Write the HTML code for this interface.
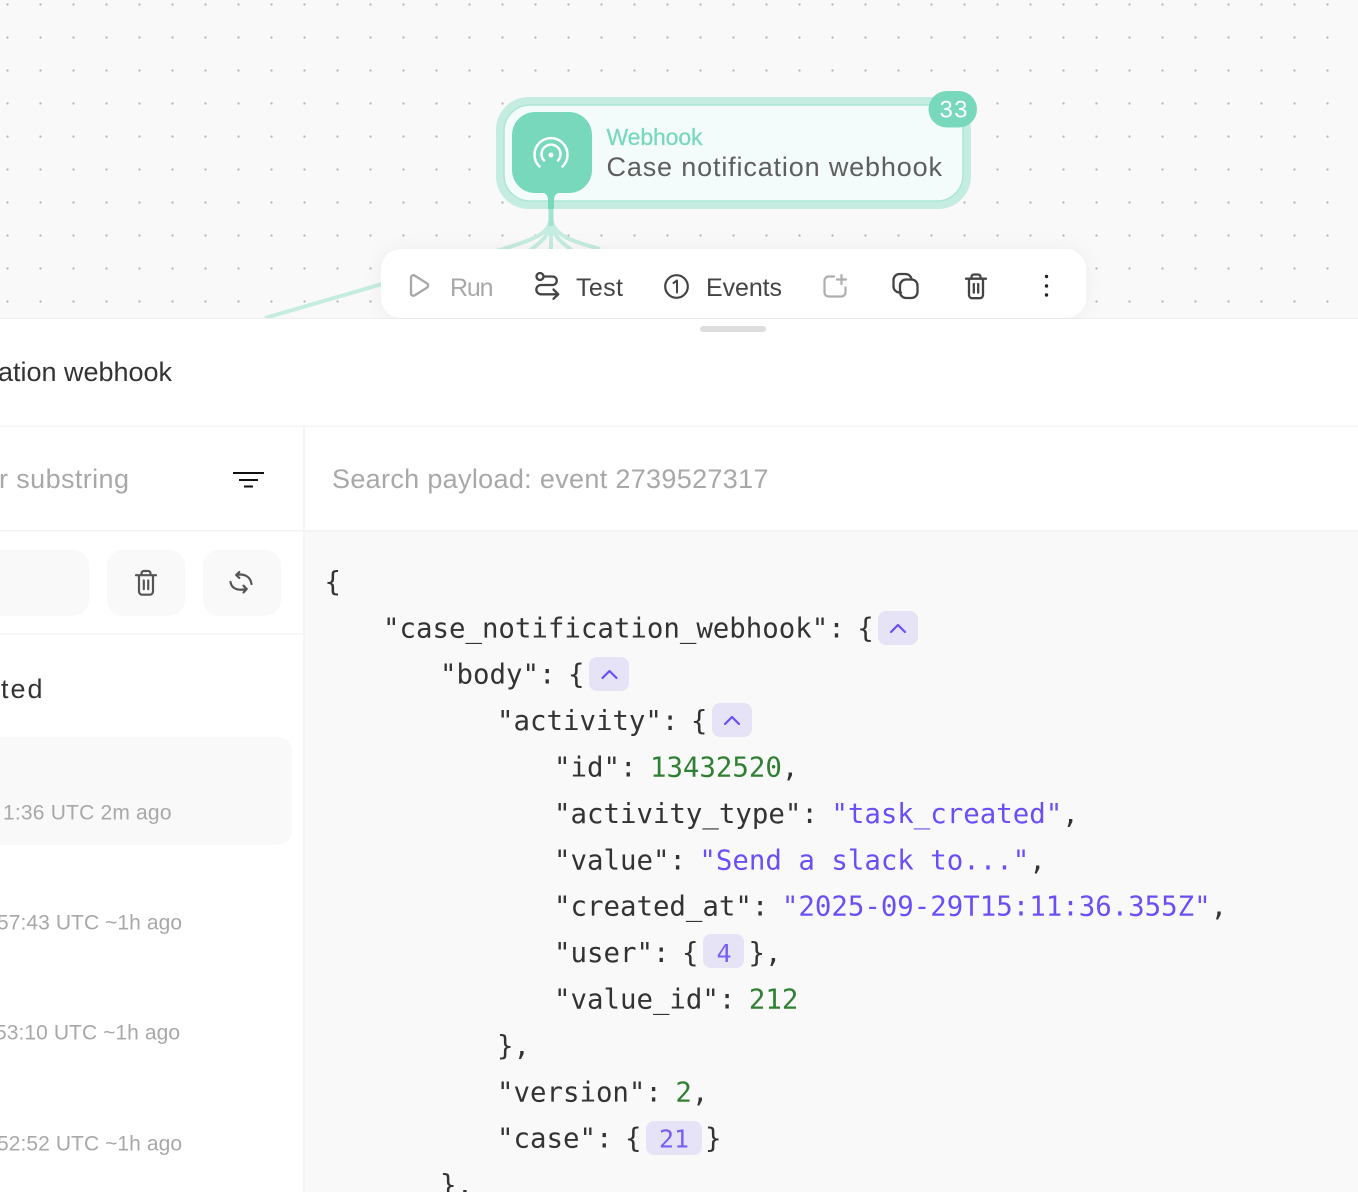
<!DOCTYPE html>
<html><head><meta charset="utf-8"><style>
html,body{margin:0;padding:0;background:#fff;width:1358px;height:1192px;overflow:hidden}
svg{display:block}
.s{font-family:"Liberation Sans",sans-serif}
.m{font-family:"DejaVu Sans Mono",monospace;font-size:27.4px;fill:#333;white-space:pre}
.v{fill:#6b4ff6}.g{fill:#2f8033}
.c{font-size:25px;fill:#7560f4}
.t{font-family:"Liberation Sans",sans-serif;font-size:21px;fill:#a8a8a8}
.i{fill:none;stroke-linecap:round;stroke-linejoin:round}
</style></head><body>
<svg width="1358" height="1192" viewBox="0 0 1358 1192" xmlns="http://www.w3.org/2000/svg">
<defs>
<pattern id="d" x="0" y="0" width="33" height="33" patternUnits="userSpaceOnUse" patternTransform="translate(-9 -12)">
<circle cx="16.5" cy="16.5" r="1.15" fill="#b4b4b4"/></pattern>
<filter id="sh" x="-10%" y="-30%" width="120%" height="160%"><feDropShadow dx="0" dy="0" stdDeviation="9" flood-color="#000" flood-opacity=".05"/></filter>
<g id="trash" class="i"><path d="M1 5.2h20M4 5.2v16.3a3.2 3.2 0 0 0 3.2 3.2h7.6a3.2 3.2 0 0 0 3.2-3.2V5.2M6.5 5V3.4A2.4 2.4 0 0 1 8.900 1h4.200a2.400 2.400 0 0 1 2.400 2.400V5M8.800 10.500v8.600M13.200 10.500v8.600"/></g>
</defs>
<rect width="1358" height="318" fill="#f9f9f9"/>
<rect width="1358" height="318" fill="url(#d)"/>

<!-- edges -->
<g fill="none" stroke="#c5ece0" stroke-width="4">
<path d="M551 214C551 234 537 238 503 249L265 318"/>
<path d="M551 214C551 236 543 240 528 252"/>
<path d="M551 214V252"/>
<path d="M551 214C551 236 559 240 574 252"/>
<path d="M551 214C551 234 567 240 600 249"/>
</g>
<path d="M551 193V226" stroke="#a2e2d0" stroke-width="5" fill="none"/>

<!-- node -->
<rect x="500" y="101" width="467" height="104" rx="29" fill="#f3fcfa" stroke="#c5ece0" stroke-width="8"/>
<rect x="504" y="105" width="459" height="96" rx="26" fill="none" stroke="#ace6d5" stroke-width="1.5"/>
<path d="M542 192h18c-3 1-5.500 3-6 7v10h-6v-10c-.5-4-3-6-6-7z" fill="#78d8bc"/>
<rect x="512" y="112" width="80" height="81" rx="23" fill="#78d8bc"/>
<g class="i" stroke="#fff" stroke-width="2.500">
<path d="M539.500 166.500A16.500 16.500 0 1 1 562.500 166.500"/>
<path d="M544 160.500A9.500 9.500 0 1 1 558 160.500"/>
</g>
<circle cx="551" cy="155" r="2.500" fill="#fff"/>
<text class="s" x="606.500" y="145" font-size="23" fill="#78d8bc" stroke="#78d8bc" stroke-width=".25" textLength="96" lengthAdjust="spacing">Webhook</text>
<text class="s" x="606.500" y="176" font-size="27" fill="#5e5e5e" textLength="335.500" lengthAdjust="spacing">Case notification webhook</text>
<rect x="928.500" y="91" width="48.500" height="36.500" rx="18.250" fill="#78d8bc"/>
<text class="s" x="939.500" y="117.500" font-size="24" fill="#fff" textLength="28" lengthAdjust="spacing">33</text>

<!-- panel -->
<rect x="0" y="318" width="1358" height="874" fill="#fff"/>
<rect x="0" y="318" width="1358" height="1" fill="#efefef"/>

<!-- toolbar -->
<rect x="381" y="249" width="705" height="69" rx="20" fill="#fff" filter="url(#sh)"/>
<rect x="0" y="319" width="1358" height="30" fill="#fff"/>
<path d="M411 278.300c0-2 2-3.200 3.700-2.200l12.300 7.800c1.500 1 1.500 3.200 0 4.200l-12.300 7.800c-1.700 1-3.700-.2-3.700-2.200z" class="i" stroke="#a8a8a8" stroke-width="2.300" transform="translate(0 -.5)"/>
<text class="s" x="450" y="296" font-size="25" fill="#a8a8a8" textLength="43.500" lengthAdjust="spacing">Run</text>
<g class="i" stroke="#444" stroke-width="2.300">
<circle cx="540" cy="276.500" r="3.500"/>
<path d="M543.500 276.500H552.500a4.250 4.250 0 0 1 0 8.500H541a4.650 4.650 0 0 0 0 9.300H558M553.500 289.500l4.800 4.800-4.800 4.500"/>
</g>
<text class="s" x="576" y="296" font-size="25" fill="#444" textLength="47" lengthAdjust="spacing">Test</text>
<circle cx="676.500" cy="286.500" r="11.300" fill="none" stroke="#444" stroke-width="2.200"/>
<path d="M673.500 283l3.500-2.500v12" class="i" stroke="#444" stroke-width="2"/>
<text class="s" x="706" y="296" font-size="25" fill="#444" textLength="76" lengthAdjust="spacing">Events</text>
<g class="i" stroke="#aeaeae" stroke-width="2.200">
<path d="M834 276.500h-5.500a4 4 0 0 0-4 4v12a4 4 0 0 0 4 4h13a4 4 0 0 0 4-4v-5"/>
<path d="M841.500 275v9M837 279.500h9"/>
</g>
<g class="i" stroke="#444" stroke-width="2.300">
<path d="M901 292.500h-1.500a6 6 0 0 1-6-6v-6.500a6 6 0 0 1 6-6h6a6 6 0 0 1 6 5.500"/>
<rect x="900" y="279.500" width="17.500" height="18.500" rx="6"/>
</g>
<use href="#trash" x="965" y="273.500" stroke="#444" stroke-width="2.300"/>
<circle cx="1046.500" cy="276.500" r="1.700" fill="#222"/><circle cx="1046.500" cy="286" r="1.700" fill="#222"/><circle cx="1046.500" cy="295" r="1.700" fill="#222"/>

<!-- handle -->
<rect x="700" y="326" width="66" height="6" rx="3" fill="#dedede"/>
<text class="s" x="-2" y="381" font-size="27" fill="#333" textLength="174" lengthAdjust="spacing">ation webhook</text>
<rect x="0" y="425.500" width="1358" height="1.500" fill="#f5f5f5"/>
<rect x="305" y="531" width="1053" height="661" fill="#f9f9f9"/>
<rect x="0" y="530" width="1358" height="1.500" fill="#f3f3f3"/>
<rect x="303" y="426" width="2" height="766" fill="#f5f5f5"/>

<!-- left column -->
<text class="s" x="-1" y="488" font-size="27" fill="#a8a8a8" textLength="130" lengthAdjust="spacing">r substring</text>
<path d="M233 473h31M239 480h19M244 486.500h9" stroke="#111" stroke-width="2" fill="none"/>
<rect x="-30" y="550" width="119" height="66" rx="16" fill="#f9f9f9"/>
<rect x="107" y="550" width="78" height="66" rx="16" fill="#f9f9f9"/>
<rect x="203" y="550" width="78" height="66" rx="16" fill="#f9f9f9"/>
<use href="#trash" x="135" y="570" stroke="#555" stroke-width="2.200"/>
<g class="i" stroke="#555" stroke-width="2.200" transform="translate(.5 0)">
<path d="M236 575C244 573 250 577 251 584"/>
<path d="M238.800 572l-3.100 3 3.100 3"/>
<path d="M230 582C231 589 238 591 246 589"/>
<path d="M243 585.700l3.200 3.300-3.200 3.500"/>
</g>
<rect x="0" y="633" width="303" height="1.500" fill="#f5f5f5"/>
<text class="s" x="1" y="698" font-size="27" fill="#333" textLength="41.500" lengthAdjust="spacing">ted</text>
<rect x="-30" y="737" width="322" height="108" rx="14" fill="#f9f9f9"/>
<text class="t" x="3" y="819.500" textLength="168.500" lengthAdjust="spacing">1:36 UTC 2m ago</text>
<text class="t" x="-3" y="929.500" textLength="185" lengthAdjust="spacing">57:43 UTC ~1h ago</text>
<text class="t" x="-5" y="1039.500" textLength="185" lengthAdjust="spacing">53:10 UTC ~1h ago</text>
<text class="t" x="-3" y="1150.500" textLength="185" lengthAdjust="spacing">52:52 UTC ~1h ago</text>

<!-- payload -->
<text class="s" x="332" y="488" font-size="27" fill="#a8a8a8" textLength="436.500" lengthAdjust="spacing">Search payload: event 2739527317</text>

<g fill="#e6e3f7">
<rect x="878" y="611" width="40" height="34" rx="8"/>
<rect x="589" y="657" width="40" height="34" rx="8"/>
<rect x="712" y="703" width="40" height="34" rx="8"/>
<rect x="703" y="934" width="41" height="34" rx="8"/>
<rect x="646" y="1121" width="56" height="34" rx="8"/>
</g>
<g class="i" stroke="#6b4ff6" stroke-width="2.200">
<path d="M891 632l7-7 7 7"/><path d="M602.500 678l7-7 7 7"/><path d="M725 724l7-7 7 7"/>
</g>

<text class="m" x="324.500" y="591">{</text>
<text class="m" x="383" y="637.300">"case_notification_webhook": <tspan dx="-4">{</tspan></text>
<text class="m" x="440" y="683.700">"body": <tspan dx="-4">{</tspan></text>
<text class="m" x="497" y="730.100">"activity": <tspan dx="-4">{</tspan></text>
<text class="m" x="554" y="776.500">"id": <tspan dx="-3" class="g">13432520</tspan>,</text>
<text class="m" x="554" y="822.900">"activity_type": <tspan dx="-3" class="v">"task_created"</tspan>,</text>
<text class="m" x="554" y="869.300">"value": <tspan dx="-3" class="v">"Send a slack to..."</tspan>,</text>
<text class="m" x="554" y="915.700">"created_at": <tspan dx="-3" class="v">"2025-09-29T15:11:36.355Z"</tspan>,</text>
<text class="m" x="554" y="962.100">"user": <tspan dx="-4">{</tspan></text>
<text class="m c" x="716.500" y="961.800">4</text>
<text class="m" x="748.500" y="962.100">},</text>
<text class="m" x="554" y="1008.500">"value_id": <tspan dx="-3" class="g">212</tspan></text>
<text class="m" x="497" y="1054.900">},</text>
<text class="m" x="497" y="1101.300">"version": <tspan dx="-3" class="g">2</tspan>,</text>
<text class="m" x="497" y="1147.700">"case": <tspan dx="-4">{</tspan></text>
<text class="m c" x="659" y="1147.500">21</text>
<text class="m" x="705" y="1147.700">}</text>
<text class="m" x="440" y="1194.100">},</text>
</svg>
</body></html>
